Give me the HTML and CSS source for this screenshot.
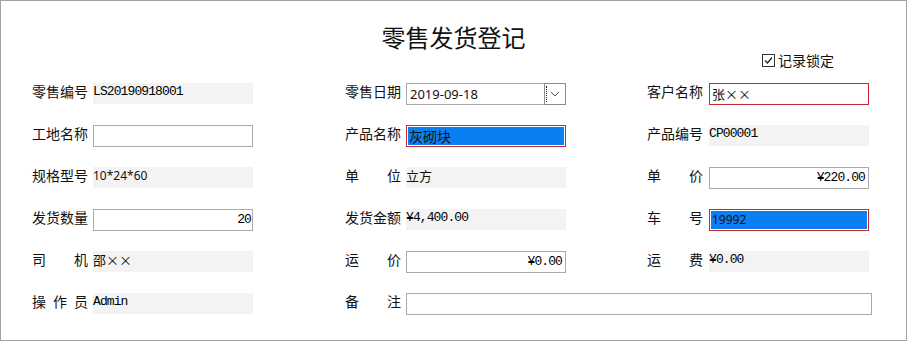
FILE: index.html
```html
<!DOCTYPE html>
<html lang="zh-CN">
<head>
<meta charset="utf-8">
<title>零售发货登记</title>
<link rel="stylesheet" href="styles.css">
</head>
<body>
<div class="frame">
  <h1 class="title">零售发货登记</h1>
  <div class="lockrow">
    <label class="lock">
      <span class="cbox"><svg width="11" height="11" viewBox="0 0 11 11"><path d="M2 5.5 L4.5 8 L9 2.5" fill="none" stroke="#222" stroke-width="1.3"/></svg></span>
      <span class="locktext">记录锁定</span>
    </label>
  </div>
  <div class="form">
    <span class="lbl">零售编号</span>
    <div class="cell"><div class="f ro mono">LS20190918001</div></div>
    <span class="lbl">零售日期</span>
    <div class="cell">
      <div class="date">
        <div class="f in sans date-in">2019-09-18</div>
        <div class="drop"><span class="focus"></span><svg width="10" height="6" viewBox="0 0 10 6"><path d="M1 1 L5 5 L9 1" fill="none" stroke="#555" stroke-width="1"/></svg></div>
      </div>
    </div>
    <span class="lbl">客户名称</span>
    <div class="cell"><div class="f err cn">张××</div></div>

    <span class="lbl">工地名称</span>
    <div class="cell"><div class="f in"></div></div>
    <span class="lbl">产品名称</span>
    <div class="cell"><div class="f sel cn big">灰砌块</div></div>
    <span class="lbl">产品编号</span>
    <div class="cell"><div class="f ro mono">CP00001</div></div>

    <span class="lbl">规格型号</span>
    <div class="cell"><div class="f ro sans sm">10*24*60</div></div>
    <span class="lbl">单 位</span>
    <div class="cell"><div class="f ro cn">立方</div></div>
    <span class="lbl">单 价</span>
    <div class="cell"><div class="f in mono right">¥220.00</div></div>

    <span class="lbl">发货数量</span>
    <div class="cell"><div class="f in mono right tight">20</div></div>
    <span class="lbl">发货金额</span>
    <div class="cell"><div class="f ro mono">¥4,400.00</div></div>
    <span class="lbl">车 号</span>
    <div class="cell"><div class="f sel sans sm">19992</div></div>

    <span class="lbl">司 机</span>
    <div class="cell"><div class="f ro cn">邵××</div></div>
    <span class="lbl">运 价</span>
    <div class="cell"><div class="f in mono right">¥0.00</div></div>
    <span class="lbl">运 费</span>
    <div class="cell"><div class="f ro mono">¥0.00</div></div>

    <span class="lbl">操 作 员</span>
    <div class="cell"><div class="f ro mono">Admin</div></div>
    <span class="lbl">备 注</span>
    <div class="cell wide"><div class="f in memo"></div></div>
  </div>
</div>
</body>
</html>
```

FILE: styles.css
```css
* { box-sizing: border-box; }
html, body { margin: 0; padding: 0; background: #fff; }
body {
  font-family: "Noto Sans CJK SC", "Noto Sans", sans-serif;
  color: #111;
}
.frame {
  width: 907px;
  height: 341px;
  border: 1px solid #a3a3a3;
  padding-top: 23px;
}
.title {
  margin: 0;
  font-size: 24px;
  line-height: 26px;
  font-weight: 400;
  text-align: center;
  color: #111;
}
.lockrow {
  display: flex;
  justify-content: flex-end;
  padding-right: 72px;
  margin-top: 2px;
  height: 16px;
}
.lock {
  display: flex;
  align-items: center;
  gap: 3px;
  font-size: 14px;
  line-height: 16px;
}
.cbox {
  width: 13px;
  height: 13px;
  border: 1px solid #333;
  display: flex;
  align-items: center;
  justify-content: center;
  background: #fff;
}
.form {
  margin-top: 15px;
  margin-left: 31px;
  display: grid;
  grid-template-columns: 61px 252px 61px 241px 62px 160px;
  grid-auto-rows: 22px;
  row-gap: 20px;
}
.lbl {
  width: 56px;
  font-size: 14px;
  line-height: 16px;
  padding-top: 0;
  text-align: justify;
  text-align-last: justify;
  white-space: nowrap;
  color: #111;
}
.cell { display: flex; }
.cell.wide { grid-column: 4 / span 3; }
.f {
  flex: 0 0 auto;
  width: 160px;
  height: 22px;
  white-space: nowrap;
  overflow: hidden;
  color: #111;
}
.ro {
  background: #f3f3f3;
  height: 21px;
  padding-top: 1px;
  line-height: 15px;
}
.in {
  border: 1px solid #ababab;
  background: #fff;
  padding: 0 3px 0 2px;
  line-height: 20px;
}
.err {
  border: 1px solid #c8282d;
  padding: 0 2px;
  line-height: 19px;
}
.sel {
  border: 1px solid #c8282d;
  padding: 1px 2px 1px 2px;
  background: #0a7ff2;
  background-clip: padding-box;
  box-shadow: inset 0 0 0 1px #fff;
  line-height: 18px;
  color: #111;
}
.mono {
  font-family: "Liberation Mono", "Noto Sans CJK SC", monospace;
  font-size: 13px;
  letter-spacing: -0.9px;
  color: #000;
}
.cn { font-family: "Noto Sans CJK SC", sans-serif; font-size: 13px; }
.big { font-size: 14px; }
.sans { font-family: "Noto Sans", "Noto Sans CJK SC", sans-serif; font-size: 13px; }
.sm { font-size: 12px; }
.right { text-align: right; }
.tight { padding-right: 1px; }
.memo { width: 466px; }
.date { display: flex; width: 160px; }
.date-in { width: 139px; padding-left: 3px; }
.drop {
  flex: 0 0 auto;
  width: 22px;
  height: 22px;
  margin-left: -1px;
  border: 1px solid #8e8e8e;
  background: #fff;
  display: flex;
  align-items: center;
  justify-content: center;
  position: relative;
}
.focus {
  position: absolute;
  left: 1px;
  top: 2px;
  height: 16px;
  border-left: 1px dotted #222;
}
```
